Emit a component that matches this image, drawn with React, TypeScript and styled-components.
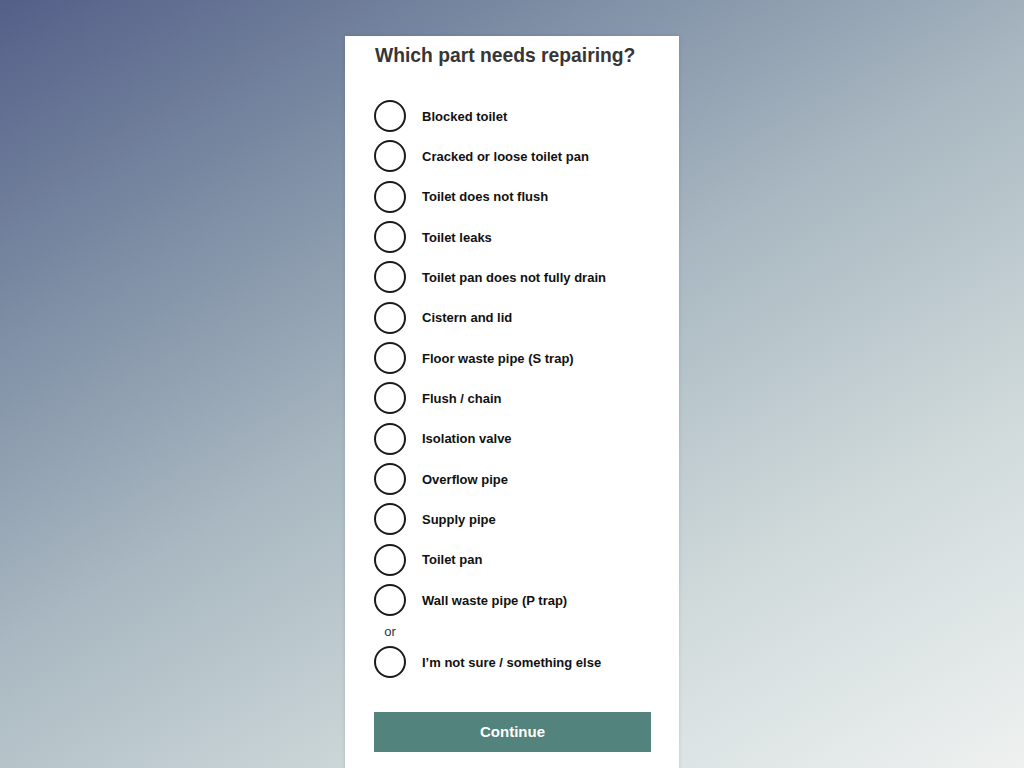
import React, { useState } from "react";
import styled, { createGlobalStyle } from "styled-components";

const Global = createGlobalStyle`
  html, body { margin: 0; padding: 0; }
  body {
    font-family: "Liberation Sans", Arial, sans-serif;
    min-height: 768px;
    background: linear-gradient(150deg, #545f88 0%, #7d8da4 24%, #a9b8c1 48%, #d0dadb 74%, #eef1f0 100%);
    overflow: hidden;
  }
`;

const Page = styled.div`
  height: 768px;
  display: flex;
  justify-content: center;
  padding-top: 36px;
  box-sizing: border-box;
`;

const Card = styled.form`
  width: 334px;
  height: 760px;
  background: #ffffff;
  box-shadow: 0 0 4px rgba(0, 0, 0, 0.12);
  padding: 8px 28px 0 29px;
  box-sizing: border-box;
  display: flex;
  flex-direction: column;
`;

const Title = styled.h1`
  margin: 0 0 28px 1px;
  font-size: 19.3px;
  line-height: 24px;
  font-weight: 700;
  color: #363636;
`;

const List = styled.div`
  display: flex;
  flex-direction: column;
`;

const Row = styled.label`
  height: 40.33px;
  display: flex;
  align-items: center;
  gap: 16px;
  cursor: pointer;
`;

const Circle = styled.span<{ $checked: boolean }>`
  width: 32px;
  height: 32px;
  box-sizing: border-box;
  border: 2px solid #1b1b1b;
  border-radius: 50%;
  flex: none;
  display: flex;
  align-items: center;
  justify-content: center;
  &::after {
    content: "";
    width: 16px;
    height: 16px;
    border-radius: 50%;
    background: #1b1b1b;
    display: ${(p) => (p.$checked ? "block" : "none")};
  }
`;

const Hidden = styled.input`
  position: absolute;
  opacity: 0;
  width: 0;
  height: 0;
`;

const Label = styled.span`
  font-size: 13px;
  font-weight: 700;
  color: #111111;
`;

const Or = styled.div`
  height: 22px;
  width: 32px;
  display: flex;
  align-items: center;
  justify-content: center;
  font-size: 13px;
  color: #333333;
`;

const Button = styled.button`
  margin-top: 29px;
  height: 40px;
  width: 277px;
  border: none;
  background: #52837c;
  color: #ffffff;
  font-family: "Liberation Sans", Arial, sans-serif;
  font-size: 15px;
  font-weight: 700;
  cursor: pointer;
`;

const options = [
  "Blocked toilet",
  "Cracked or loose toilet pan",
  "Toilet does not flush",
  "Toilet leaks",
  "Toilet pan does not fully drain",
  "Cistern and lid",
  "Floor waste pipe (S trap)",
  "Flush / chain",
  "Isolation valve",
  "Overflow pipe",
  "Supply pipe",
  "Toilet pan",
  "Wall waste pipe (P trap)",
];

const other = "I’m not sure / something else";

export default function App() {
  const [value, setValue] = useState<string | null>(null);
  const renderRow = (o: string) => (
    <Row key={o}>
      <Hidden type="radio" name="part" checked={value === o} onChange={() => setValue(o)} />
      <Circle $checked={value === o} />
      <Label>{o}</Label>
    </Row>
  );
  return (
    <>
      <Global />
      <Page>
        <Card onSubmit={(e) => e.preventDefault()}>
          <Title>Which part needs repairing?</Title>
          <List>
            {options.map(renderRow)}
            <Or>or</Or>
            {renderRow(other)}
          </List>
          <Button type="submit">Continue</Button>
        </Card>
      </Page>
    </>
  );
}
